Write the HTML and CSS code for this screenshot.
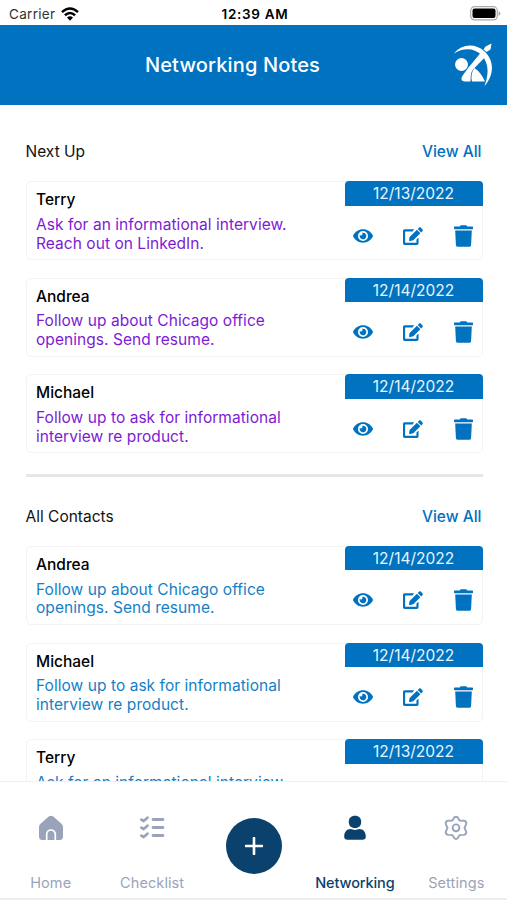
FILE: index.html
```html
<!DOCTYPE html>
<html lang="en">
<head>
<meta charset="utf-8">
<title>Networking Notes</title>
<link rel="stylesheet" href="styles.css">
</head>
<body>
<svg class="defs" aria-hidden="true">
  <symbol id="eye" viewBox="0 0 576 512"><path d="M572.52 241.4C518.29 135.59 410.93 64 288 64S57.68 135.64 3.48 241.41a32.35 32.35 0 0 0 0 29.19C57.71 376.41 165.07 448 288 448s230.32-71.64 284.52-177.41a32.35 32.35 0 0 0 0-29.19zM288 400a144 144 0 1 1 144-144 143.93 143.93 0 0 1-144 144zm0-240a95.31 95.31 0 0 0-25.31 3.79 47.85 47.85 0 0 1-66.9 66.9A95.78 95.78 0 1 0 288 160z"/></symbol>
  <symbol id="edit" viewBox="0 0 576 512"><path d="M402.3 344.9l32-32c5-5 13.7-1.5 13.7 5.7V464c0 26.5-21.5 48-48 48H48c-26.5 0-48-21.5-48-48V112c0-26.5 21.5-48 48-48h273.500l-50 60H62v326h324V361zM402 75 L501 174 L296.300 378 L206 402 C185 405 171 391 174 370 L190 287zM424 53 L460 17 C475 2 500 2 515 17 L559 61 C574 76 574 101 559 116 L523 152z"/></symbol>
  <symbol id="trash" viewBox="0 0 448 512"><path d="M432 32H312l-9.400-18.700A24 24 0 0 0 281.100 0H166.800a23.720 23.720 0 0 0-21.400 13.300L136 32H16A16 16 0 0 0 0 48v32a16 16 0 0 0 16 16h416a16 16 0 0 0 16-16V48a16 16 0 0 0-16-16zM45 467a48 48 0 0 0 47.900 45h262a48 48 0 0 0 47.900-45L420 124H28z"/></symbol>
</svg>
<div class="app">
  <div class="status">
    <div class="carrier"><span>Carrier</span>
      <svg class="wifi" viewBox="0 0 18 14"><g fill="none" stroke="#000" stroke-width="2.500"><path d="M1 5.100Q9-2 17 5.100"/><path d="M3.900 8.300Q9 3.800 14.100 8.300"/></g><path d="M6 10.600Q9 8 12 10.600L9 13.700z"/></svg>
    </div>
    <div class="time">12:39 AM</div>
    <svg class="battery" viewBox="0 0 31 15"><rect x=".7" y=".7" width="26.600" height="13.200" rx="3.800" fill="#fff" stroke="#aaa" stroke-width="1.200"/><rect x="2.500" y="2.500" width="23" height="9.600" rx="2" fill="#000"/><path d="M28.600 5v5Q30.500 9 30.500 7.500T28.600 5z" fill="#aaa"/></svg>
  </div>
  <header class="header">
    <h1>Networking Notes</h1>
    <svg class="logo" viewBox="0 0 40 44"><path d="M1 10.500C8 1 22-.5 31 8C41.500 17 41.500 32 31.500 43C36 31 36 20 28.500 12C21 4.500 10 4.500 1 10.500z"/><path d="M38.500 .5L37.500 6.500L33.500 9L30.500 6.500L32.500 3.500z"/><path d="M27.500 10L32 14.300L21 25.500C17 29.500 18 33 17.500 38.500H12C8 38.500 7.500 35 10 32L15.500 24.500z"/><circle cx="8.500" cy="21.500" r="6.500"/><path d="M21.500 25Q28 29.500 32 38.500H19Q17 31 21.500 25z"/></svg>
  </header>
  <main class="content" id="content"></main>
  <nav class="tabs">
    <a class="tab"><svg viewBox="0 0 26 26"><path d="M11 1.300Q13 0 15 1.300L23.500 8.800Q25 10 25 12V21.500Q25 25 21.500 25H4.500Q1 25 1 21.500V12Q1 10 2.500 8.800z"/><path d="M8.700 25.500V19.500C8.700 13.500 17.300 13.500 17.300 19.500V25.500" fill="none" stroke="#fff" stroke-width="1.700"/></svg><span>Home</span></a>
    <a class="tab"><svg class="line" viewBox="0 0 26 26"><path d="M2.300 4.600L4.700 6L8.500 2.700M2.300 12.600L4.700 14L8.500 10.700M2.300 20.600L4.700 22L8.500 18.700M14 4.500H24M14 12.500H24M14 20.500H24" stroke-width="2.800"/></svg><span>Checklist</span></a>
    <a class="add"><svg viewBox="0 0 18 18"><path d="M9 1V17M1 9H17" stroke="#fff" stroke-width="2.600" stroke-linecap="round"/></svg></a>
    <a class="tab active"><svg viewBox="0 0 26 26"><path d="M13 .8C17 .8 19.200 3.200 19.200 7S17 13 13 13S6.800 10.700 6.800 7S9 .8 13 .8zM2.200 21.500C2.200 16.700 5 14 8.500 14L13 15L17.500 14C21 14 23.800 16.700 23.800 21.500Q23.800 24.800 20.500 24.800H5.500Q2.200 24.800 2.200 21.500z"/></svg><span>Networking</span></a>
    <a class="tab"><svg class="line" viewBox="0 0 26 26"><path d="M11.200 2.500Q13 .8 14.800 2.500L16.500 5.500L21 5.700Q23.600 6.500 23.300 8.800L21.500 12.800L23.300 16.800Q23.600 19.100 21 19.900L16.500 20.100L14.800 23.100Q13 24.800 11.200 23.100L9.500 20.100L5 19.900Q2.400 19.100 2.700 16.800L4.500 12.800L2.700 8.800Q2.400 6.500 5 5.700L9.500 5.500z" stroke-width="1.900"/><circle cx="13" cy="12.800" r="3.400" stroke-width="1.900"/></svg><span>Settings</span></a>
  </nav>
</div>
<script src="app.js"></script>
</body>
</html>
```
FILE: styles.css
```css
* { box-sizing: border-box; }
body { margin: 0; font-family: Inter, "Liberation Sans", sans-serif; color: #111; background: #fff; }
.defs { position: absolute; width: 0; height: 0; }
.app { display: flex; flex-direction: column; width: 507px; height: 900px; overflow: hidden; }
.status { flex: none; display: grid; grid-template-columns: 1fr auto 1fr; align-items: center; height: 25px; padding: 2px 6px 0 9px; font-size: 13px; }
.carrier { display: flex; align-items: center; gap: 6px; font-size: 13.500px; letter-spacing: .3px; color: #333; }
.wifi { width: 18px; height: 14px; }
.time { font-size: 13.500px; font-weight: 600; color: #000; letter-spacing: .7px; }
.battery { width: 31px; height: 15px; justify-self: end; }
.header { flex: none; display: grid; grid-template-columns: 65px 1fr 93px; align-items: center; height: 80px; padding: 0 14px 0 0; background: #0072bf; color: #fff; }
.header h1 { grid-column: 2; margin: 0; text-align: center; font-size: 20px; line-height: 24px; font-weight: 500; letter-spacing: .15px; }
.logo { justify-self: end; width: 40px; height: 44px; fill: #fff; }
.content { flex: none; height: 676px; overflow: hidden; padding: 34px 24.500px 0 25.500px; }
.section-head { display: flex; justify-content: space-between; align-items: center; height: 25px; font-size: 15.500px; }
.section-head a { margin-right: 1px; color: #0072bf; font-weight: 500; }
.cards { display: flex; flex-direction: column; gap: 17.600px; margin-top: 17px; }
.card { display: flex; justify-content: space-between; height: 79px; border: 1px solid #f3f3f3; border-radius: 5px; }
.info { padding: 8px 0 0 9.500px; }
.name { font-size: 15.500px; line-height: 19px; font-weight: 500; color: #000; }
.note { margin: 6.800px 0 0; font-size: 15.500px; line-height: 18.700px; letter-spacing: .05px; color: #7d1bd3; white-space: nowrap; }
.note span { display: block; }
.contacts .note { color: #1580c5; }
.side { width: 138px; margin: -1px -1px 0 0; }
.date { height: 24.500px; border-radius: 4px 4px 0 0; background: #0072bf; color: #e9f5fc; text-align: center; font-size: 15.500px; line-height: 25px; }
.actions { display: flex; align-items: center; justify-content: space-between; padding: 0 10px 0 8px; height: 60px; fill: #0072bf; }
.actions svg { width: 20px; height: 18px; }
.actions .trash { width: 19px; height: 22px; }
.divider { height: 2.500px; margin: 21px 0 27.300px; background: #e6e6e6; }
.tabs { flex: none; display: flex; height: 119px; border-top: 1px solid #f0f0f0; border-bottom: 2px solid #eee; background: #fff; }
.tab, .add { flex: 1; display: flex; flex-direction: column; align-items: center; }
.tab { padding-top: 33px; color: #9ba3ba; fill: #99a4bb; font-size: 14.500px; line-height: 18px; letter-spacing: .1px; }
.tab svg { width: 26px; height: 26px; margin-bottom: 33px; }
.tab .line { fill: none; stroke: #99a4bb; stroke-linecap: round; stroke-linejoin: round; }
.tab.active { color: #0b426d; fill: #0b426d; font-weight: 500; letter-spacing: -.1px; }
.add { flex: none; width: 56px; height: 56px; margin: 36px 22.700px 0; border-radius: 50%; background: #0b426d; justify-content: center; }
.add svg { width: 18px; height: 18px; }
```
FILE: app.js
```js
const terry = ["Terry", "12/13/2022", "Ask for an informational interview.", "Reach out on LinkedIn."];
const andrea = ["Andrea", "12/14/2022", "Follow up about Chicago office", "openings. Send resume."];
const michael = ["Michael", "12/14/2022", "Follow up to ask for informational", "interview re product."];

const card = ([name, date, first, second]) => `
  <article class="card">
    <div class="info"><div class="name">${name}</div><p class="note"><span>${first}</span><span>${second}</span></p></div>
    <div class="side"><div class="date">${date}</div>
      <div class="actions"><svg><use href="#eye"/></svg><svg><use href="#edit"/></svg><svg class="trash"><use href="#trash"/></svg></div>
    </div>
  </article>`;

const section = (title, cls, people) => `
  <div class="section-head"><span>${title}</span><a>View All</a></div>
  <div class="cards ${cls}">${people.map(card).join("")}</div>`;

document.getElementById("content").innerHTML =
  section("Next Up", "upcoming", [terry, andrea, michael]) +
  '<div class="divider"></div>' +
  section("All Contacts", "contacts", [andrea, michael, terry]);
```
